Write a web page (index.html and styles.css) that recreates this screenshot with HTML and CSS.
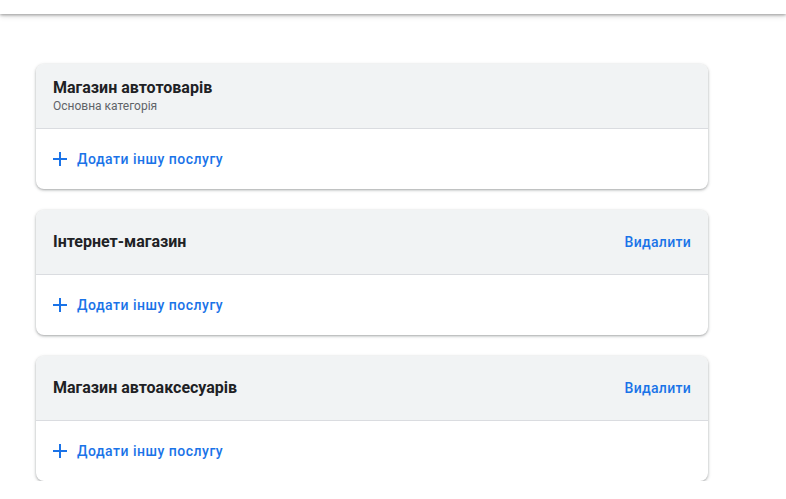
FILE: index.html
```html
<!DOCTYPE html>
<html lang="uk">
<head>
    <meta charset="UTF-8">
    <meta name="viewport" content="width=device-width, initial-scale=1.0">
    <title>Категорії</title>
    <link rel="stylesheet" href="styles.css">
</head>
<body>
    <div class="topbar"></div>

    <div class="content">
        <div class="card">
            <div class="card-head">
                <div>
                    <div class="card-title">Магазин автотоварів</div>
                    <div class="card-sub">Основна категорія</div>
                </div>
            </div>
            <div class="card-body">
                <a class="add-link" href="#">
                    <svg width="14" height="14" viewBox="0 0 14 14"><path d="M7 0v14M0 7h14" stroke="#1a73e8" stroke-width="2"/></svg>
                    Додати іншу послугу
                </a>
            </div>
        </div>

        <div class="card">
            <div class="card-head">
                <div class="card-title">Інтернет-магазин</div>
                <a class="remove-link" href="#">Видалити</a>
            </div>
            <div class="card-body">
                <a class="add-link" href="#">
                    <svg width="14" height="14" viewBox="0 0 14 14"><path d="M7 0v14M0 7h14" stroke="#1a73e8" stroke-width="2"/></svg>
                    Додати іншу послугу
                </a>
            </div>
        </div>

        <div class="card">
            <div class="card-head">
                <div class="card-title">Магазин автоаксесуарів</div>
                <a class="remove-link" href="#">Видалити</a>
            </div>
            <div class="card-body">
                <a class="add-link" href="#">
                    <svg width="14" height="14" viewBox="0 0 14 14"><path d="M7 0v14M0 7h14" stroke="#1a73e8" stroke-width="2"/></svg>
                    Додати іншу послугу
                </a>
            </div>
        </div>
    </div>
</body>
</html>
```

FILE: styles.css
```css
body {
    margin: 0;
    font-family: Roboto, "Noto Sans", Arial, sans-serif;
    background-color: white;
    color: #202124;
}

.topbar {
    height: 14px;
    background-color: white;
    box-shadow: 0 1px 3px rgba(0, 0, 0, 0.35), 0 2px 6px rgba(0, 0, 0, 0.12);
}

.content {
    width: 672px;
    margin: 50px 0 0 36px;
    display: flex;
    flex-direction: column;
    gap: 21px;
}

.card {
    border-radius: 8px;
    background-color: white;
    box-shadow: 0 1px 2px rgba(60, 64, 67, 0.3), 0 1px 3px 1px rgba(60, 64, 67, 0.15);
    overflow: hidden;
}

.card-head {
    height: 65px;
    box-sizing: border-box;
    padding: 0 17px;
    background-color: #f1f3f4;
    border-bottom: 1px solid #dadce0;
    display: flex;
    align-items: center;
    justify-content: space-between;
}

.card-title {
    font-size: 16px;
    font-weight: 700;
    color: #202124;
    line-height: 20px;
}

.card-sub {
    font-size: 12px;
    color: #5f6368;
    line-height: 16px;
}

.remove-link {
    color: #1a73e8;
    font-size: 14px;
    font-weight: 500;
    text-decoration: none;
    letter-spacing: 0.3px;
}

.card-body {
    height: 60px;
    padding: 0 17px;
    display: flex;
    align-items: center;
}

.add-link {
    display: flex;
    align-items: center;
    gap: 10px;
    color: #1a73e8;
    font-size: 14px;
    font-weight: 500;
    text-decoration: none;
    letter-spacing: 0.5px;
}
```
